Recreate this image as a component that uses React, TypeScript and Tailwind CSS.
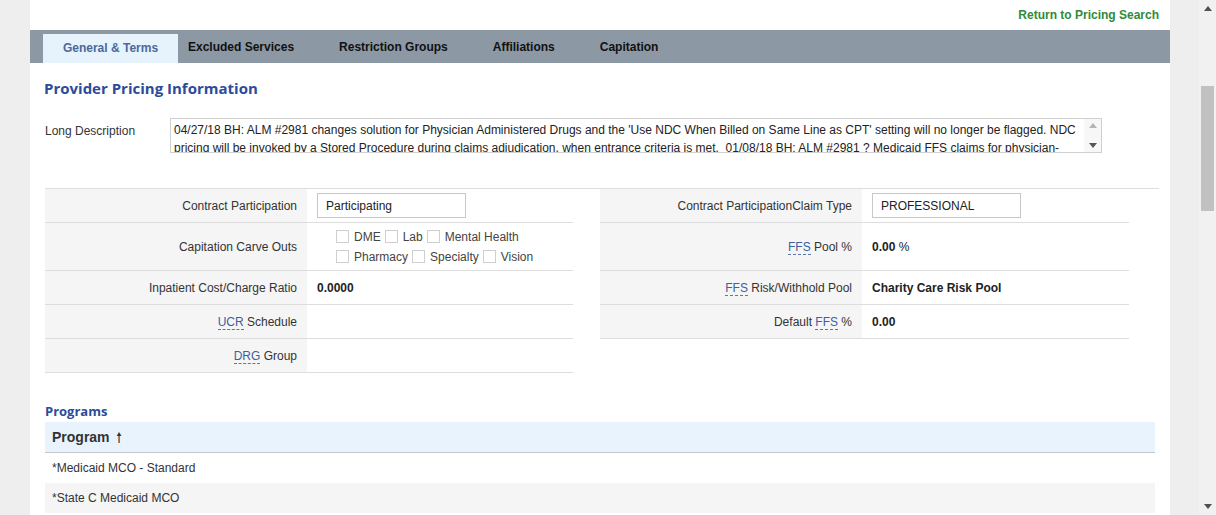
function Abbr({ children }: { children: React.ReactNode }) {
  return <span className="border-b border-dashed border-[#5a78b0] text-[#3d5f9f]">{children}</span>
}

function Check({ label }: { label: string }) {
  return (
    <span className="flex items-center">
      <span className="mr-[5px] inline-block h-[13px] w-[13px] border border-[#cfcfcf] bg-white" />
      <span className="mr-[4px]">{label}</span>
    </span>
  )
}

function Row({
  label,
  h = 'h-[34px]',
  children,
}: {
  label: React.ReactNode
  h?: string
  children?: React.ReactNode
}) {
  return (
    <div className={`flex border-b border-[#dddddd] ${h}`}>
      <div className="flex w-[262px] shrink-0 items-center justify-end bg-[#f5f5f5] pr-[10px] text-[#333]">{label}</div>
      <div className="flex flex-1 items-center pl-[10px] text-[#222]">{children}</div>
    </div>
  )
}

export default function App() {
  const tabs = ['Excluded Services', 'Restriction Groups', 'Affiliations', 'Capitation']
  return (
    <div className="flex h-[515px] w-[1216px] overflow-hidden bg-[#efeeee] text-[12px] text-[#333] [font-family:'Liberation_Sans',Arial,sans-serif]">
      <div className="w-[30px] shrink-0" />
      <div className="w-[1140px] shrink-0 bg-white">
        <div className="flex h-[30px] items-center justify-end pr-[11px]">
          <a className="text-[12px] font-bold text-[#2f8a3c]">Return to Pricing Search</a>
        </div>

        <div className="flex h-[33px] bg-[#8c98a4] pl-[13px]">
          <div className="mt-[4px] flex h-[29px] w-[135px] justify-center bg-[#e6f2fc] pt-[5px] font-bold text-[#4a6a9c]">
            General &amp; Terms
          </div>
          <div className="ml-[10px] flex items-center gap-[45px] font-bold text-[#111]">
            {tabs.map((t) => (
              <span key={t}>{t}</span>
            ))}
          </div>
        </div>

        <div className="px-[14px]">
          <h1 className="mt-[15px] text-[15px] leading-[20px] font-bold text-[#2b4b9b] [font-family:'Open_Sans',sans-serif]">
            Provider Pricing Information
          </h1>

          <div className="mt-[20px] flex pl-[1px]">
            <div className="w-[125px] shrink-0 pt-[4px]">Long Description</div>
            <div className="relative h-[35px] w-[932px] overflow-hidden border border-[#d0d0d0]">
              <div className="w-[914px] pt-[2px] pl-[3px] leading-[18px] text-[#222]">
                04/27/18 BH: ALM #2981 changes solution for Physician Administered Drugs and the 'Use NDC When Billed on Same
                Line as CPT' setting will no longer be flagged. NDC pricing will be invoked by a Stored Procedure during claims
                adjudication, when entrance criteria is met.&nbsp; 01/08/18 BH: ALM #2981 ? Medicaid FFS claims for
                physician-administered drugs must include NDC information.
              </div>
              <div className="absolute top-0 right-0 flex h-full w-[17px] flex-col items-center justify-between bg-[#f7f7f7] py-[4px]">
                <svg width="8" height="5" viewBox="0 0 8 5">
                  <path d="M0 5 L4 0 L8 5 Z" fill="#b5b5b5" />
                </svg>
                <svg width="8" height="5" viewBox="0 0 8 5">
                  <path d="M0 0 L4 5 L8 0 Z" fill="#555" />
                </svg>
              </div>
            </div>
          </div>

          <div className="mt-[35px] ml-[1px] w-[1114px] border-t border-[#dddddd]">
            <div className="flex gap-[27px]">
              <div className="w-[528px]">
                <Row label="Contract Participation">
                  <div className="flex h-[25px] w-[149px] items-center border border-[#c8c8c8] pl-[8px] text-[#222]">
                    Participating
                  </div>
                </Row>
                <Row label="Capitation Carve Outs" h="h-[48px]">
                  <div className="flex flex-col gap-[2px] pl-[19px] text-[#444]">
                    <div className="flex">
                      <Check label="DME" />
                      <Check label="Lab" />
                      <Check label="Mental Health" />
                    </div>
                    <div className="flex">
                      <Check label="Pharmacy" />
                      <Check label="Specialty" />
                      <Check label="Vision" />
                    </div>
                  </div>
                </Row>
                <Row label="Inpatient Cost/Charge Ratio">
                  <span className="font-bold">0.0000</span>
                </Row>
                <Row
                  label={
                    <span>
                      <Abbr>UCR</Abbr> Schedule
                    </span>
                  }
                />
                <Row
                  label={
                    <span>
                      <Abbr>DRG</Abbr> Group
                    </span>
                  }
                />
              </div>

              <div className="w-[529px]">
                <Row label="Contract ParticipationClaim Type">
                  <div className="flex h-[25px] w-[149px] items-center border border-[#c8c8c8] pl-[8px] text-[#222]">
                    PROFESSIONAL
                  </div>
                </Row>
                <Row
                  label={
                    <span>
                      <Abbr>FFS</Abbr> Pool %
                    </span>
                  }
                  h="h-[48px]"
                >
                  <span>
                    <span className="font-bold">0.00</span> %
                  </span>
                </Row>
                <Row
                  label={
                    <span>
                      <Abbr>FFS</Abbr> Risk/Withhold Pool
                    </span>
                  }
                >
                  <span className="font-bold">Charity Care Risk Pool</span>
                </Row>
                <Row
                  label={
                    <span>
                      Default <Abbr>FFS</Abbr> %
                    </span>
                  }
                >
                  <span className="font-bold">0.00</span>
                </Row>
              </div>
            </div>
          </div>

          <h2 className="mt-[30px] ml-[1px] text-[13px] leading-[17px] font-bold text-[#2b4b9b] [font-family:'Open_Sans',sans-serif]">
            Programs
          </h2>
          <div className="mt-[2px] ml-[1px] w-[1110px]">
            <div className="flex h-[31px] items-center border-b border-[#c5c9cd] bg-[#e8f3fd] pl-[7px] text-[14px] font-bold text-[#333]">
              Program <span className="ml-[6px] font-normal">🠕</span>
            </div>
            <div className="flex h-[30px] items-center pl-[7px]">*Medicaid MCO - Standard</div>
            <div className="flex h-[30px] items-center bg-[#f5f5f5] pl-[7px]">*State C Medicaid MCO</div>
          </div>
        </div>
      </div>
      <div className="w-[29px] shrink-0" />
      <div className="flex w-[17px] shrink-0 flex-col items-center bg-[#f1f1f1]">
        <svg className="mt-[6px]" width="8" height="5" viewBox="0 0 8 5">
          <path d="M0 5 L4 0 L8 5 Z" fill="#505050" />
        </svg>
        <div className="mt-[75px] h-[125px] w-[13px] bg-[#c1c1c1]" />
        <div className="flex-1" />
        <svg className="mb-[6px]" width="8" height="5" viewBox="0 0 8 5">
          <path d="M0 0 L4 5 L8 0 Z" fill="#505050" />
        </svg>
      </div>
    </div>
  )
}
